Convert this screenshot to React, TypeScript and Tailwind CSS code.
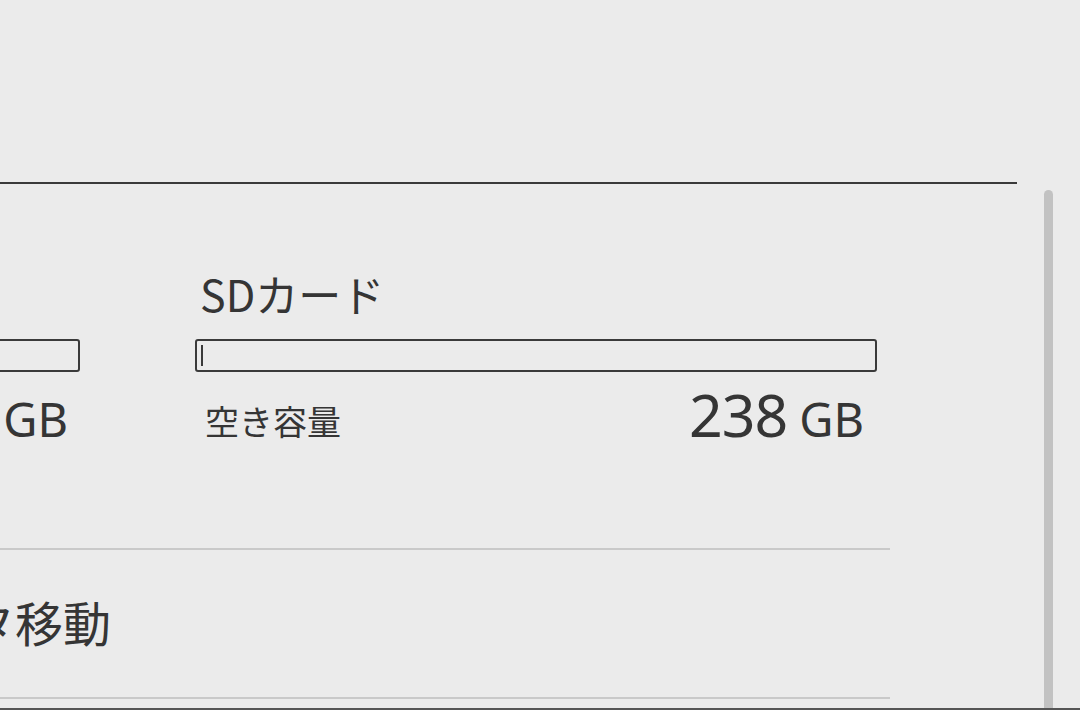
import React from "react";

const latin = { fontFamily: '"Noto Sans", "Noto Sans CJK JP", sans-serif' };
const jp = { fontFamily: '"Noto Sans CJK JP", "Noto Sans", sans-serif' };

function StorageColumn({
  label,
  value,
  showUsed,
  hideLabel,
  pr,
}: {
  label: string;
  value: string;
  showUsed: boolean;
  hideLabel?: boolean;
  pr: string;
}) {
  return (
    <div className="w-[682px] shrink-0 flex flex-col">
      <div
        className={
          "text-[43px] leading-none h-[43px] whitespace-nowrap pl-[5px]" + (hideLabel ? " invisible" : "")
        }
        style={jp}
      >
        {label}
      </div>
      <div className="mt-[24px] h-[33px] border-2 border-[#3a3a3a] rounded-[3px] pl-[4px] py-[4px] flex">
        {showUsed && <div className="h-full w-[2px] bg-[#3a3a3a]" />}
      </div>
      <div className={"mt-[13px] flex items-end justify-between pl-[10px] " + pr}>
        <div className="text-[34px] leading-none mb-[6px]" style={jp}>
          空き容量
        </div>
        <div className="flex items-baseline gap-[12px] leading-none" style={latin}>
          <span className="text-[59px] tracking-[-1px]">{value}</span>
          <span className="text-[47px]">GB</span>
        </div>
      </div>
    </div>
  );
}

export default function App() {
  return (
    <div className="w-[1080px] h-[710px] bg-[#ebebeb] overflow-hidden flex flex-col text-[#353535]">
      <div className="h-[182px] shrink-0" />
      <div className="flex flex-1 min-h-0">
        <div className="w-[1017px] shrink-0 flex flex-col">
          <div className="h-[2px] bg-[#3a3a3a]" />
          <div className="w-[890px] flex flex-col">
            <div className="flex gap-[115px] ml-[-602px] pt-[88px] h-[364px]">
              <StorageColumn label="本体保存メモリー" value="24.4" showUsed={false} hideLabel pr="pr-[12px]" />
              <StorageColumn label="SDカード" value="238" showUsed pr="pr-[13px]" />
            </div>
            <div className="h-[2px] bg-[#c9c9c9]" />
            <div className="h-[147px] flex items-center">
              <div className="ml-[-129px] text-[48px] leading-none whitespace-nowrap mb-[6px]" style={jp}>
                データ移動
              </div>
            </div>
            <div className="h-[2px] bg-[#c9c9c9]" />
          </div>
        </div>
        <div className="ml-[27px] pt-[8px] flex">
          <div className="w-[9px] h-full rounded-t-full bg-[#c2c2c2]" />
        </div>
      </div>
      <div className="h-[2px] bg-[#555555] shrink-0" />
    </div>
  );
}
